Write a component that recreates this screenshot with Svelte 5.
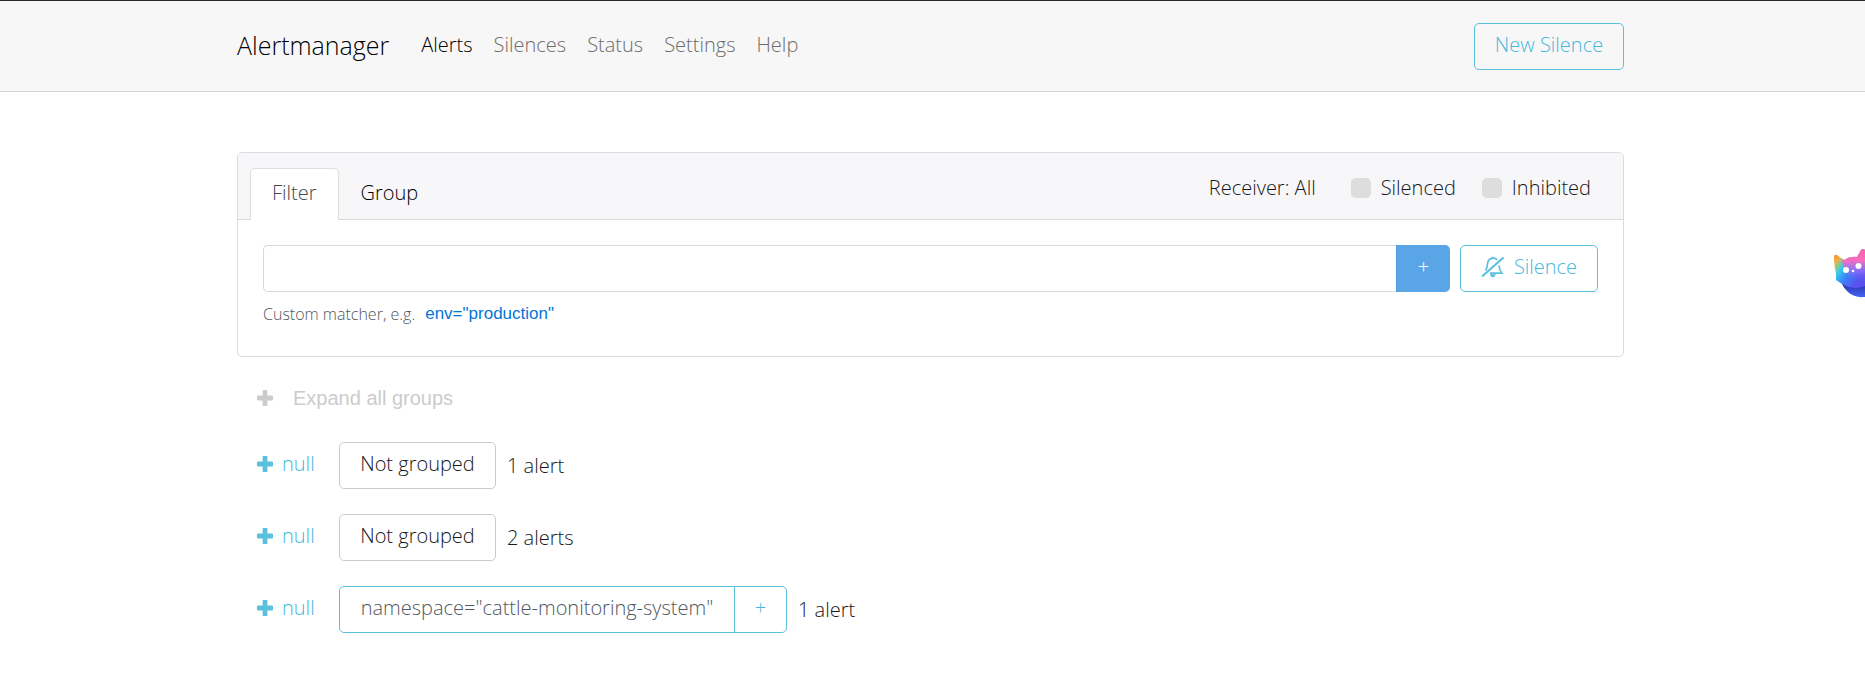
<script>
  const links = ['Alerts', 'Silences', 'Status', 'Settings', 'Help'];
  const groups = [
    { matcher: null, count: '1 alert' },
    { matcher: null, count: '2 alerts' },
    { matcher: 'namespace="cattle-monitoring-system"', count: '1 alert' }
  ];
  let silenced = $state(false);
  let inhibited = $state(false);
  let matcher = $state('');
</script>

{#snippet plus()}
  <svg class="plus" viewBox="0 0 16 16" aria-hidden="true">
    <path d="M6.600 0h2.800q1 0 1 1v4.600H15q1 0 1 1v2.800q0 1-1 1h-4.600V15q0 1-1 1H6.600q-1 0-1-1v-4.600H1q-1 0-1-1V6.600q0-1 1-1h4.600V1q0-1 1-1z" />
  </svg>
{/snippet}

<header>
  <nav class="container">
    <a class="brand" href="#/">Alertmanager</a>
    <div class="links">
      {#each links as link, i}
        <a class:active={i === 0} href="#/{link.toLowerCase()}">{link}</a>
      {/each}
    </div>
    <a class="btn info" href="#/silences/new">New Silence</a>
  </nav>
</header>

<main>
  <div class="container">
    <section class="card">
      <div class="card-header">
        <div class="tabs">
          <button class="tab current">Filter</button>
          <button class="tab">Group</button>
        </div>
        <div class="options">
          <button class="receiver">Receiver: All</button>
          <label><input type="checkbox" bind:checked={silenced} />Silenced</label>
          <label><input type="checkbox" bind:checked={inhibited} />Inhibited</label>
        </div>
      </div>
      <div class="card-body">
        <div class="filter">
          <div class="input-group">
            <input type="text" aria-label="Custom matcher" bind:value={matcher} />
            <button class="add">+</button>
          </div>
          <button class="btn info silence">
            <svg viewBox="0 0 24 22" aria-hidden="true" fill="none" stroke="currentColor">
              <path d="M4.500 14.500C6 12.500 6.300 11 6.500 8c.2-3.500 2-5.500 5.300-5.800 2-.1 3.400.6 4.400 1.700M18 9.500c.2 3 1 5.500 3 7.700H9" stroke-width="1.700" />
              <path d="M11.800 2.200V.8" stroke-width="2" />
              <path d="M1 20.500L22.500 1.500" stroke-width="2.200" />
              <path d="M9.300 18.500h5c0 1.700-1 2.500-2.500 2.500s-2.500-.8-2.500-2.500z" fill="currentColor" stroke-width=".5" />
            </svg>
            Silence
          </button>
        </div>
        <div class="hint">
          <span>Custom matcher, e.g.</span>
          <button>env="production"</button>
        </div>
      </div>
    </section>

    <button class="expand">{@render plus()}Expand all groups</button>

    {#each groups as group}
      <div class="group">
        <button class="toggle">{@render plus()}null</button>
        {#if group.matcher}
          <div class="pair">
            <span class="btn info matcher">{group.matcher}</span>
            <button class="btn info more">+</button>
          </div>
        {:else}
          <span class="btn plain">Not grouped</span>
        {/if}
        <span class="count">{group.count}</span>
      </div>
    {/each}
  </div>
</main>

<button class="assistant" aria-label="Assistant">
  <svg viewBox="0 0 32 52" aria-hidden="true">
    <defs>
      <linearGradient id="face" x1="0" y1="0.2" x2="0.7" y2="0.9">
        <stop offset="0" stop-color="#ff8a35" />
        <stop offset=".14" stop-color="#f0b040" />
        <stop offset=".26" stop-color="#7fce90" />
        <stop offset=".4" stop-color="#35c5f2" />
        <stop offset=".65" stop-color="#3b82fa" />
        <stop offset="1" stop-color="#5a50ee" />
      </linearGradient>
      <linearGradient id="crown" x1="0.2" y1="0" x2="0.2" y2="1">
        <stop offset="0" stop-color="#ff5fa8" />
        <stop offset=".35" stop-color="#f96cc0" />
        <stop offset=".65" stop-color="#a86cf5" stop-opacity=".7" />
        <stop offset="1" stop-color="#5564f5" stop-opacity="0" />
      </linearGradient>
      <linearGradient id="body" x1="0" y1="0" x2="0" y2="1">
        <stop offset="0" stop-color="#252a9c" />
        <stop offset="1" stop-color="#4563f5" />
      </linearGradient>
    </defs>
    <path fill="url(#body)" d="M9 37C14 47 22 51 32 50V34z" />
    <path fill="url(#face)" d="M1 10Q1 7 4 8L11 13Q17 9 24 10L28 3Q30 1 32 3V39Q22 43 13 39Q7 36 3 33V27Q1 18 1 10z" />
    <path fill="url(#crown)" d="M9 12L11 13Q17 9 24 10L28 3Q30 1 32 3V35Q20 34 12 24Q9 18 9 12z" />
    <circle cx="13" cy="23" r="3" fill="#fff" />
    <circle cx="25.500" cy="19" r="3" fill="#fff" />
    <circle cx="20" cy="24" r="1.300" fill="#fff" />
  </svg>
</button>

<style>
  :global(body) {
    background: #fff;
    color: #16181a;
    font: 300 20px/30px "Open Sans", sans-serif;
  }
  :global(*) { box-sizing: border-box; }
  a { text-decoration: none; color: inherit; }
  button {
    padding: 0;
    border: 0;
    background: none;
    color: inherit;
    font: inherit;
    cursor: pointer;
  }
  .container {
    width: calc(100% - 40px);
    max-width: 1387px;
    margin: 0 auto;
  }
  header {
    border-top: 1px solid #2c252c;
    border-bottom: 1px solid #d5d5d5;
    background: #f7f7f7;
    padding: 22px 4px 21px 0;
  }
  nav { display: flex; align-items: center; }
  .brand { font-size: 25px; color: #000; margin-right: 32px; padding-bottom: 4px; }
  .links { display: flex; gap: 21px; color: #6c6c6c; padding-bottom: 4px; }
  .links .active { color: #000; }
  nav .btn { margin-left: auto; min-width: 150px; }
  .btn {
    display: inline-flex;
    align-items: center;
    justify-content: center;
    height: 47px;
    padding: 0 14px 4px;
    border: 1px solid #ccc;
    border-radius: 5px;
    background: none;
    white-space: nowrap;
  }
  .info { color: #46b8da; border-color: #5bc0de; }
  main { padding-right: 4px; }
  .card {
    margin-top: 60px;
    border: 1px solid #dcdcdc;
    border-radius: 5px;
  }
  .card-header {
    display: flex;
    justify-content: space-between;
    padding: 15px 32px 0 12px;
    border-bottom: 1px solid #d9d9db;
    background: #f7f7f9;
    border-radius: 4px 4px 0 0;
  }
  .tabs { display: flex; margin-bottom: -1px; }
  .tab {
    height: 52px;
    padding: 0 21px 4px;
    border: 1px solid transparent;
    border-bottom: 0;
    border-radius: 5px 5px 0 0;
    color: #000;
  }
  .current { background: #fff; border-color: #ddd; color: #45494c; }
  .options { display: flex; height: 40px; align-items: center; }
  .receiver { margin-right: 35px; }
  .receiver, label { line-height: 28px; padding-bottom: 1px; }
  label { display: flex; align-items: center; gap: 10px; }
  label + label { margin-left: 26px; }
  input[type="checkbox"] {
    appearance: none;
    width: 20px;
    height: 20px;
    margin: 0;
    border-radius: 5px;
    background: #ddd;
  }
  input[type="checkbox"]:checked { background: #0275d8; }
  .card-body { padding: 25px 25px 27px; }
  .filter { display: flex; gap: 10px; }
  .input-group { display: flex; flex: 1; }
  input[type="text"] {
    flex: 1;
    min-width: 0;
    height: 47px;
    padding: 0 15px;
    border: 1px solid #d9d9d9;
    border-right: 0;
    border-radius: 5px 0 0 5px;
    font: inherit;
  }
  .add {
    width: 54px;
    padding-bottom: 4px;
    border-left: 1px solid #4e9de0;
    border-radius: 0 5px 5px 0;
    background: #5aa5e6;
    color: #fff;
  }
  .silence { gap: 9px; min-width: 138px; }
  .silence svg { flex: none; width: 24px; height: 22px; color: #5bc0de; }
  .hint {
    display: flex;
    gap: 10px;
    margin-top: 7px;
    font-size: 16px;
    color: #50585e;
  }
  .hint button { font: 17px/30px "Liberation Sans", sans-serif; color: #0275d8; }
  .plus { flex: none; width: 16px; height: 16px; fill: currentColor; }
  .expand {
    display: flex;
    align-items: center;
    gap: 20px;
    margin: 26px 20px 0;
    color: #ccc;
    font: 20px/30px "Liberation Sans", sans-serif;
  }
  .group { display: flex; align-items: center; margin-top: 25px; }
  .expand + .group { margin-top: 29px; }
  .toggle {
    display: flex;
    align-items: center;
    gap: 9px;
    width: 82px;
    margin-left: 20px;
    padding-bottom: 4px;
    color: #46b8da;
  }
  .toggle .plus { fill: #5bc0de; }
  .plain { min-width: 157px; }
  .pair { display: flex; }
  .matcher { min-width: 396px; color: #50585e; border-radius: 5px 0 0 5px; }
  .more { width: 53px; margin-left: -1px; padding: 0 0 4px; border-radius: 0 5px 5px 0; }
  .count { margin-left: 11px; }
  .assistant { position: fixed; right: 0; top: 247px; width: 32px; height: 52px; }
  .assistant svg { display: block; width: 32px; height: 52px; }
</style>
